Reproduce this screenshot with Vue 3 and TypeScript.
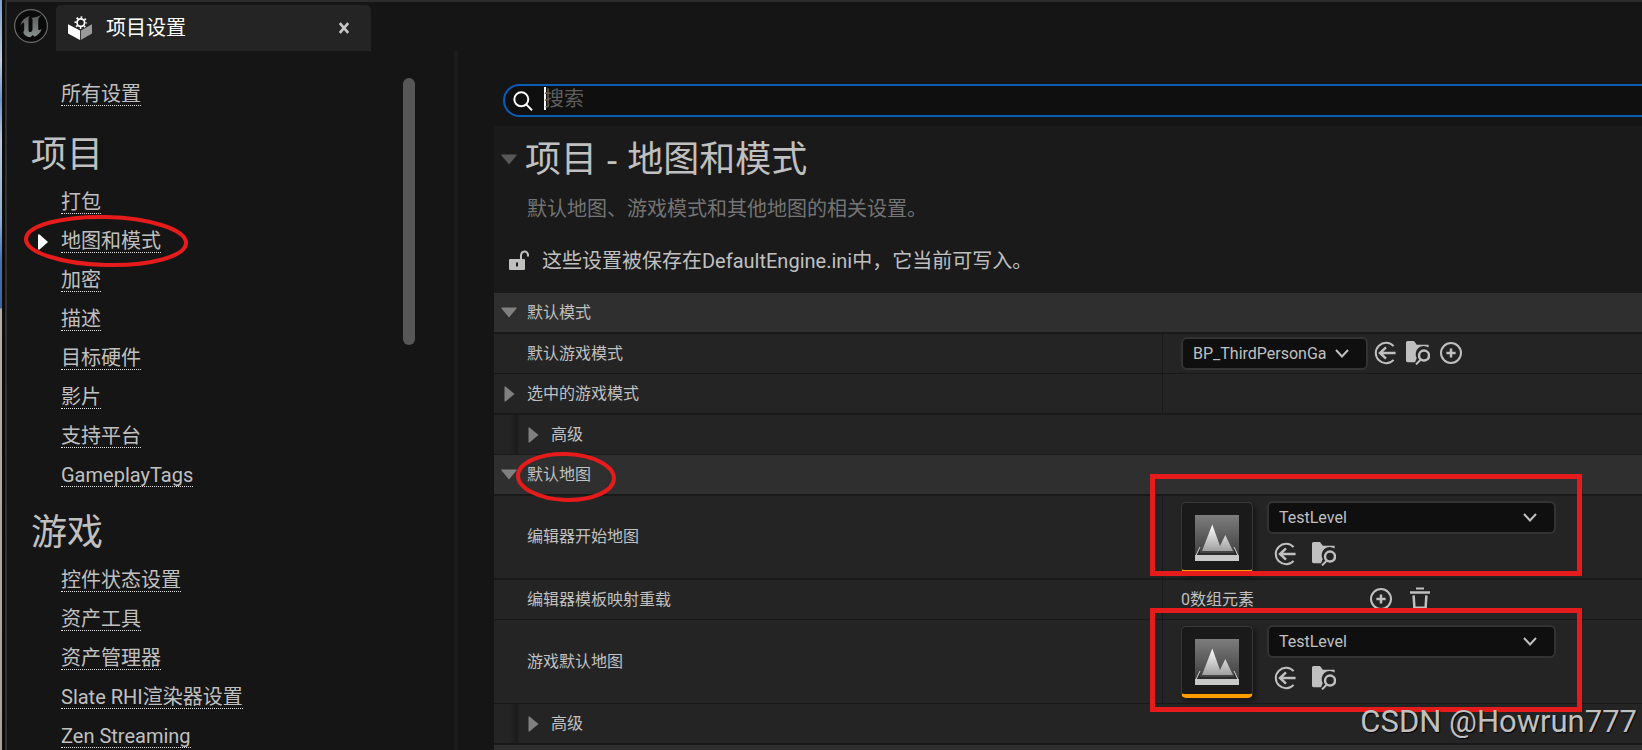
<script setup lang="ts">
import { ref } from 'vue'

interface NavGroup {
  title: string
  items: string[]
}

interface Row {
  kind: 'category' | 'property' | 'advanced'
  label: string
  arrow?: 'down' | 'right'
  control?: 'mode' | 'level' | 'array' | 'none'
  tall?: boolean
  thick?: boolean
}

const groups: NavGroup[] = [
  {
    title: '项目',
    items: ['打包', '地图和模式', '加密', '描述', '目标硬件', '影片', '支持平台', 'GameplayTags'],
  },
  {
    title: '游戏',
    items: ['控件状态设置', '资产工具', '资产管理器', 'Slate RHI渲染器设置', 'Zen Streaming'],
  },
]

const rows: Row[] = [
  { kind: 'category', label: '默认模式', arrow: 'down', thick: true },
  { kind: 'property', label: '默认游戏模式', control: 'mode' },
  { kind: 'property', label: '选中的游戏模式', arrow: 'right', control: 'none', thick: true },
  { kind: 'advanced', label: '高级', arrow: 'right' },
  { kind: 'category', label: '默认地图', arrow: 'down', thick: true },
  { kind: 'property', label: '编辑器开始地图', control: 'level', tall: true, thick: true },
  { kind: 'property', label: '编辑器模板映射重载', control: 'array' },
  { kind: 'property', label: '游戏默认地图', control: 'level', tall: true },
  { kind: 'advanced', label: '高级', arrow: 'right', thick: true },
  { kind: 'category', label: '' },
]

const current = ref('地图和模式')
const query = ref('')
</script>

<template>
  <div class="screen">
    <div class="desktop-edge"></div>
    <div class="window">
      <header class="titlebar">
        <svg class="logo" viewBox="0 0 36 36" aria-hidden="true">
          <defs>
            <linearGradient id="ueFill" x1="0" y1="0" x2="0" y2="1">
              <stop offset="0" stop-color="#5c5c5c" />
              <stop offset="1" stop-color="#8a9090" />
            </linearGradient>
          </defs>
          <circle cx="18" cy="18" r="16.4" fill="#0a0a0a" stroke="#6a6a6a" stroke-width="1.2" />
          <path
            fill="url(#ueFill)"
            d="M7.500 17.500C8.800 12.400 12.300 9.200 17 8C15.800 9 15.500 9.900 15.500 11.400V22C15.500 23.600 16.600 24.300 17.700 23.900C18.900 23.500 19.500 22.600 19.500 21.500V11.800C19.500 10.800 19.100 10.300 18 10.100C21 9.500 25.900 8.700 28.600 6.800C26.500 8.900 25.200 10 25.200 12.200V21C25.200 22.500 26.200 22.600 28.600 21C27.400 24.900 24.700 27.500 21.500 28.700L19.800 27L17.200 29.300C13.400 28.800 10.600 26.600 10.200 23.700C10.900 23.500 11.200 22.900 11.200 22V15.300C11.200 13.900 9.700 14.600 7.500 17.500Z"
          />
        </svg>
        <div class="tab">
          <svg class="tab-icon" viewBox="0 0 24 24" aria-hidden="true">
            <path fill="#fff" d="M0 8.2L12 14.6V24L0 17.4Z" />
            <path fill="#9a9a9a" d="M24 8.2L12.8 14.6V24L24 17.4Z" />
            <circle cx="12.8" cy="6.6" r="5.2" fill="#242424" />
            <circle cx="12.8" cy="6.6" r="3.8" fill="none" stroke="#fff" stroke-width="1.7" />
            <circle
              cx="12.8"
              cy="6.6"
              r="5.4"
              fill="none"
              stroke="#fff"
              stroke-width="1.8"
              stroke-dasharray="1.7 2.54"
              stroke-dashoffset=".85"
            />
          </svg>
          <span class="tab-title">项目设置</span>
          <button class="tab-close" type="button" aria-label="关闭">
            <svg viewBox="0 0 12 12"><path d="M1.8 1.2L10.2 10.8M10.2 1.2L1.8 10.8" /></svg>
          </button>
        </div>
      </header>

      <div class="body">
        <nav class="sidebar">
          <div class="nav-list">
            <div class="nav-row all"><a href="#all">所有设置</a></div>
            <section v-for="g in groups" :key="g.title">
              <h2>{{ g.title }}</h2>
              <div v-for="item in g.items" :key="item" class="nav-row">
                <svg v-if="item === current" class="marker" viewBox="0 0 10 16" aria-hidden="true">
                  <path d="M0 .5H1.6L10 8L1.6 15.5H0Z" />
                </svg>
                <a href="#item" @click.prevent="current = item">{{ item }}</a>
              </div>
            </section>
          </div>
          <div class="scrollbar"></div>
        </nav>

        <main class="main">
          <label class="search">
            <svg viewBox="0 0 20 20" aria-hidden="true">
              <circle cx="8.3" cy="8.3" r="7" />
              <path d="M13.2 13.4L19 19.2" />
            </svg>
            <span class="caret"></span>
            <input v-model="query" type="text" placeholder="搜索" aria-label="搜索" />
          </label>

          <div class="panel">
            <div class="heading">
              <svg class="arrow-down dim" viewBox="0 0 16 11"><path d="M.5 .5H15.5V1.5L8 10.5L.5 1.5Z" /></svg>
              <h1>项目 - 地图和模式</h1>
            </div>
            <p class="desc">默认地图、游戏模式和其他地图的相关设置。</p>
            <div class="notice">
              <svg viewBox="0 0 20 22" aria-hidden="true">
                <path class="shackle" d="M12 10.5V6.2A3.6 4.4 0 0 1 19 5.6V7.6" />
                <path
                  class="lock"
                  fill-rule="evenodd"
                  d="M1 10H15A1 1 0 0 1 16 11V20A1 1 0 0 1 15 21H1A1 1 0 0 1 0 20V11A1 1 0 0 1 1 10ZM7 13.5V17.5H9V13.5Z"
                />
              </svg>
              <span>这些设置被保存在DefaultEngine.ini中，它当前可写入。</span>
            </div>

            <div class="grid">
              <div
                v-for="(r, i) in rows"
                :key="i"
                class="row"
                :class="[r.kind, { tall: r.tall, thick: r.thick }]"
              >
                <div class="name">
                  <span class="toggle">
                    <svg v-if="r.arrow === 'down'" class="arrow-down" viewBox="0 0 16 11">
                      <path d="M.5 .5H15.5V1.5L8 10.5L.5 1.5Z" />
                    </svg>
                    <svg v-else-if="r.arrow === 'right'" class="arrow-right" viewBox="0 0 11 16">
                      <path d="M.5 .5H1.5L10.5 8L1.5 15.5H.5Z" />
                    </svg>
                  </span>
                  <span class="label">{{ r.label }}</span>
                </div>

                <div v-if="r.kind === 'property'" class="value">
                  <template v-if="r.control === 'mode'">
                    <span class="combo mode">
                      <select :aria-label="r.label"><option>BP_ThirdPersonGa</option></select>
                      <svg viewBox="0 0 14 9"><path d="M1 1L7 7.5L13 1" /></svg>
                    </span>
                    <span class="tools">
                      <button type="button" class="icon" aria-label="使用选中资产">
                        <svg viewBox="0 0 24 24">
                          <path class="line" d="M20.6 5.2A10.2 10.2 0 1 0 20.6 18.8" />
                          <path class="line bold" d="M22.6 12H7M13 6.4L7 12L13 17.6" />
                        </svg>
                      </button>
                      <button type="button" class="icon" aria-label="浏览">
                        <svg viewBox="0 0 24 24">
                          <path class="solid" d="M1.6 0H8L10.8 3.8H22.6V6.6A8 8 0 0 0 10.8 17L9 21.2H1.6A1.6 1.6 0 0 1 0 19.6V1.6A1.6 1.6 0 0 1 1.6 0Z" />
                          <path class="line" d="M14.4 19L10 23.4" />
                          <circle class="line bold" cx="18" cy="14.6" r="5" />
                        </svg>
                      </button>
                      <button type="button" class="icon" aria-label="新建">
                        <svg viewBox="0 0 24 24">
                          <circle class="line" cx="12" cy="12" r="10" />
                          <path class="line bold" d="M12 7.4V16.6M7.4 12H16.6" />
                        </svg>
                      </button>
                    </span>
                  </template>

                  <template v-else-if="r.control === 'level'">
                    <div class="thumb">
                      <svg viewBox="0 0 44 46" aria-hidden="true">
                        <defs>
                          <linearGradient :id="'sky' + i" x1="0" y1="0" x2="0" y2="1">
                            <stop offset="0" stop-color="#7d7d7d" />
                            <stop offset="1" stop-color="#3c3c3c" />
                          </linearGradient>
                          <linearGradient :id="'peak' + i" x1="0" y1="0" x2="0" y2="1">
                            <stop offset="0" stop-color="#fff" />
                            <stop offset="1" stop-color="#a0a0a0" />
                          </linearGradient>
                        </defs>
                        <rect width="44" height="42" :fill="`url(#sky${i})`" />
                        <path fill="#2b2b2b" d="M5 33L1 41H43L39 33V38H5Z" />
                        <path :fill="`url(#peak${i})`" d="M7 36L17.3 9.5L25 31L30.3 20L38 36Z" />
                        <path fill="none" stroke="#d0d0d0" stroke-width="1" d="M5 32L1 40.500H43L39 32" />
                        <rect y="40" width="44" height="6" fill="#c8c8c8" />
                      </svg>
                    </div>
                    <div class="asset">
                      <span class="combo level">
                        <select :aria-label="r.label"><option>TestLevel</option></select>
                        <svg viewBox="0 0 14 9"><path d="M1 1L7 7.5L13 1" /></svg>
                      </span>
                      <span class="tools wide">
                        <button type="button" class="icon" aria-label="使用选中资产">
                          <svg viewBox="0 0 24 24">
                            <path class="line" d="M20.6 5.2A10.2 10.2 0 1 0 20.6 18.8" />
                            <path class="line bold" d="M22.6 12H7M13 6.4L7 12L13 17.6" />
                          </svg>
                        </button>
                        <button type="button" class="icon" aria-label="浏览">
                          <svg viewBox="0 0 24 24">
                            <path class="solid" d="M1.6 0H8L10.8 3.8H22.6V6.6A8 8 0 0 0 10.8 17L9 21.2H1.6A1.6 1.6 0 0 1 0 19.6V1.6A1.6 1.6 0 0 1 1.6 0Z" />
                            <path class="line" d="M14.4 19L10 23.4" />
                            <circle class="line bold" cx="18" cy="14.6" r="5" />
                          </svg>
                        </button>
                      </span>
                    </div>
                  </template>

                  <template v-else-if="r.control === 'array'">
                    <span class="count label">0数组元素</span>
                    <span class="tools wide">
                      <button type="button" class="icon" aria-label="添加元素">
                        <svg viewBox="0 0 24 24">
                          <circle class="line" cx="12" cy="12" r="10" />
                          <path class="line bold" d="M12 7.400V16.600M7.400 12H16.600" />
                        </svg>
                      </button>
                      <button type="button" class="icon" aria-label="移除所有元素">
                        <svg viewBox="0 0 24 24">
                          <path class="solid" d="M8 .4H16V2.500H8ZM2 4.200H22V6.800H2Z" />
                          <path class="line bold" d="M5.600 8.400L6.400 20.800H17.600L18.400 8.400" />
                        </svg>
                      </button>
                    </span>
                  </template>
                </div>
              </div>
            </div>
          </div>
        </main>
      </div>
    </div>

    <svg class="mark nav-mark" viewBox="0 0 166 54" aria-hidden="true">
      <ellipse cx="83" cy="27" rx="80" ry="24" transform="rotate(1.500 83 27)" />
    </svg>
    <svg class="mark category-mark" viewBox="0 0 102 52" aria-hidden="true">
      <ellipse cx="51" cy="26" rx="48" ry="23" transform="rotate(2 51 26)" />
    </svg>
    <div class="box-mark first"></div>
    <div class="box-mark second"></div>
    <div class="watermark">CSDN @Howrun777</div>
  </div>
</template>

<style>
body {
  background: #151515;
  overflow: hidden;
}
</style>

<style scoped>
* {
  box-sizing: border-box;
}

.screen {
  position: relative;
  display: flex;
  height: 100vh;
  overflow: hidden;
  background: #151515;
  color: #c0c0c0;
  font-family: Roboto, 'Noto Sans CJK SC', sans-serif;
  font-size: 16px;
}

.desktop-edge {
  flex: none;
  width: 5px;
  border-right: 3px solid #0c0c0c;
  background: linear-gradient(#7fa3cc 0, #c3cbdc 60px, #6e97c6 100px, #c0c8d8 140px, #8fb0d0 220px, #4a74b0 260px, #41639c 308px, #b4aeaa 309px, #a9a29c 100%);
}

.window {
  flex: 1;
  min-width: 0;
  display: flex;
  flex-direction: column;
  border-top: 2px solid #2c2c2c;
  border-left: 2px solid #303030;
}

.titlebar {
  flex: none;
  display: flex;
  align-items: flex-start;
  height: 49px;
  padding: 3px 0 0 6px;
}

.logo {
  width: 36px;
  height: 36px;
  margin: 3px 7px 0 0;
}

.tab {
  display: flex;
  align-items: center;
  width: 315px;
  height: 46px;
  padding: 0 16px 0 12px;
  border-radius: 5px 5px 0 0;
  background: #242424;
  color: #fff;
}

.tab-icon {
  width: 24px;
  height: 24px;
  margin-right: 14px;
}

.tab-title {
  flex: 1;
  font-size: 20px;
  line-height: 24px;
}

.tab-close {
  display: flex;
  padding: 5px;
  border: 0;
  background: none;
}

.tab-close svg {
  width: 12px;
  height: 12px;
  stroke: #c8c8c8;
  stroke-width: 2.6;
}

.body {
  flex: 1;
  min-height: 0;
  display: flex;
}

.sidebar {
  flex: none;
  display: flex;
  justify-content: space-between;
  width: 451px;
  padding: 24px 39px 0 0;
  border-right: 4px solid #1b1b1b;
  overflow: hidden;
}

.nav-row {
  display: flex;
  align-items: center;
  position: relative;
  height: 39px;
  padding-left: 54px;
}

.nav-row.all {
  margin-bottom: 3px;
}

.nav-row a {
  padding-top: 1px;
  border-bottom: 1px dotted #e0e0e0;
  color: #c0c0c0;
  font-size: 20px;
  line-height: 21px;
  text-decoration: none;
  white-space: nowrap;
}

.marker {
  position: absolute;
  left: 31px;
  width: 10px;
  height: 16px;
  fill: #fff;
}

h1,
h2 {
  margin: 0;
  font-weight: 400;
}

h2 {
  height: 66px;
  padding: 6px 0 0 24px;
  font-size: 36px;
  line-height: 64px;
}

.scrollbar {
  width: 12px;
  height: 267px;
  margin-top: 3px;
  border-radius: 6px;
  background: #575757;
}

.main {
  flex: 1;
  min-width: 0;
  padding: 33px 0 0 36px;
}

.search {
  display: flex;
  align-items: center;
  height: 33px;
  margin: 0 -20px 9px 9px;
  padding-left: 8px;
  border: 2px solid #0a5cb4;
  border-radius: 17px;
  background: #0f0f0f;
}

.search svg {
  width: 20px;
  height: 20px;
  fill: none;
  stroke: #fff;
  stroke-width: 2;
}

.caret {
  width: 2px;
  height: 23px;
  margin: 0 -2px 4px 11px;
  background: #fff;
}

.search input {
  flex: 1;
  min-width: 0;
  height: 29px;
  padding: 0 0 4px;
  border: 0;
  outline: 0;
  background: none;
  color: #c0c0c0;
  font: inherit;
  font-size: 20px;
}

.search input::placeholder {
  color: #5e5e5e;
}

.panel {
  background: #1a1a1a;
}

.heading {
  display: flex;
  align-items: center;
  height: 60px;
  padding: 6px 0 0 7px;
  gap: 8px;
}

h1 {
  font-family: 'Noto Sans', 'Noto Sans CJK SC', sans-serif;
  font-size: 36px;
  line-height: 50px;
}

.arrow-down {
  width: 16px;
  height: 11px;
  fill: #808080;
}

.arrow-down.dim {
  fill: #585858;
}

.arrow-right {
  width: 11px;
  height: 16px;
  fill: #808080;
}

.desc {
  height: 44px;
  margin: 0;
  padding-left: 33px;
  color: #747474;
  font-size: 20px;
  line-height: 46px;
}

.notice {
  display: flex;
  align-items: center;
  gap: 13px;
  height: 63px;
  padding: 0 0 4px 15px;
  font-size: 20px;
}

.notice svg {
  width: 20px;
  height: 22px;
}

.lock {
  fill: #c0c0c0;
}

.shackle {
  fill: none;
  stroke: #c0c0c0;
  stroke-width: 2;
}

.grid {
  background: #191919;
}

.row {
  display: grid;
  grid-template-columns: 668fr 480fr;
  height: 40px;
  border-bottom: 1px solid #191919;
  background: #242424;
}

.row.thick {
  height: 41px;
  border-bottom-width: 2px;
}

.row.tall {
  height: 84px;
}

.row.category {
  background: #2f2f2f;
}

.name {
  display: flex;
  align-items: center;
  padding-left: 7px;
}

.toggle {
  display: flex;
  justify-content: center;
  width: 16px;
  margin-right: 10px;
}

.label {
  padding-bottom: 4px;
}

.row.advanced .name {
  margin-left: 24px;
}

.row.advanced {
  background: linear-gradient(90deg, #242424 16px, #1a1a1a 24px, #242424 24px);
}

.value {
  display: flex;
  align-items: center;
  padding-left: 18px;
  border-left: 1px solid #191919;
}

.tall .value {
  align-items: flex-start;
  padding-top: 5px;
}

.combo {
  position: relative;
  display: flex;
}

.combo select {
  appearance: none;
  width: 100%;
  height: 33px;
  padding: 0 10px;
  border: 2px solid #333;
  border-radius: 6px;
  background: #0f0f0f;
  color: #c0c0c0;
  font: inherit;
}

.combo svg {
  position: absolute;
  top: 12px;
  right: 19px;
  width: 14px;
  height: 9px;
  fill: none;
  stroke: #c0c0c0;
  stroke-width: 2;
  pointer-events: none;
}

.combo.mode {
  width: 187px;
}

.combo.level {
  width: 289px;
}

.tools {
  display: flex;
  gap: 9px;
  margin-left: 5px;
  padding-bottom: 2px;
}

.tools.wide {
  gap: 15px;
}

.icon {
  display: flex;
  padding: 0;
  border: 0;
  background: none;
}

.icon svg {
  width: 24px;
  height: 24px;
}

.line {
  fill: none;
  stroke: #c0c0c0;
  stroke-width: 2;
}

.line.bold {
  stroke-width: 2.5;
}

.solid {
  fill: #c0c0c0;
}

.thumb {
  display: flex;
  justify-content: center;
  width: 72px;
  height: 72px;
  margin: 1px 14px 0 0;
  padding-top: 12px;
  border: 1px solid #383838;
  border-bottom: 4px solid #ff9c00;
  border-radius: 5px;
  background: #1a1a1a;
  box-shadow: 3px 3px 4px #171717;
}

.thumb svg {
  width: 44px;
  height: 46px;
}

.asset {
  display: flex;
  flex-direction: column;
  gap: 8px;
}

.asset .tools {
  margin-left: 6px;
}

.count {
  width: 183px;
}

.mark {
  position: absolute;
  fill: none;
  stroke: #e61b1b;
  stroke-width: 4;
}

.nav-mark {
  left: 23px;
  top: 214px;
  width: 166px;
  height: 54px;
}

.category-mark {
  left: 515px;
  top: 451px;
  width: 102px;
  height: 52px;
}

.box-mark {
  position: absolute;
  left: 1150px;
  width: 432px;
  border: 5px solid #e61b1b;
  pointer-events: none;
}

.box-mark.first {
  top: 474px;
  height: 102px;
}

.box-mark.second {
  top: 608px;
  height: 104px;
}

.watermark {
  position: absolute;
  right: 5px;
  bottom: 10px;
  color: #c0c0c0;
  font-size: 31px;
  line-height: 36px;
  text-shadow: 1px 1px 1px #000;
}
</style>
